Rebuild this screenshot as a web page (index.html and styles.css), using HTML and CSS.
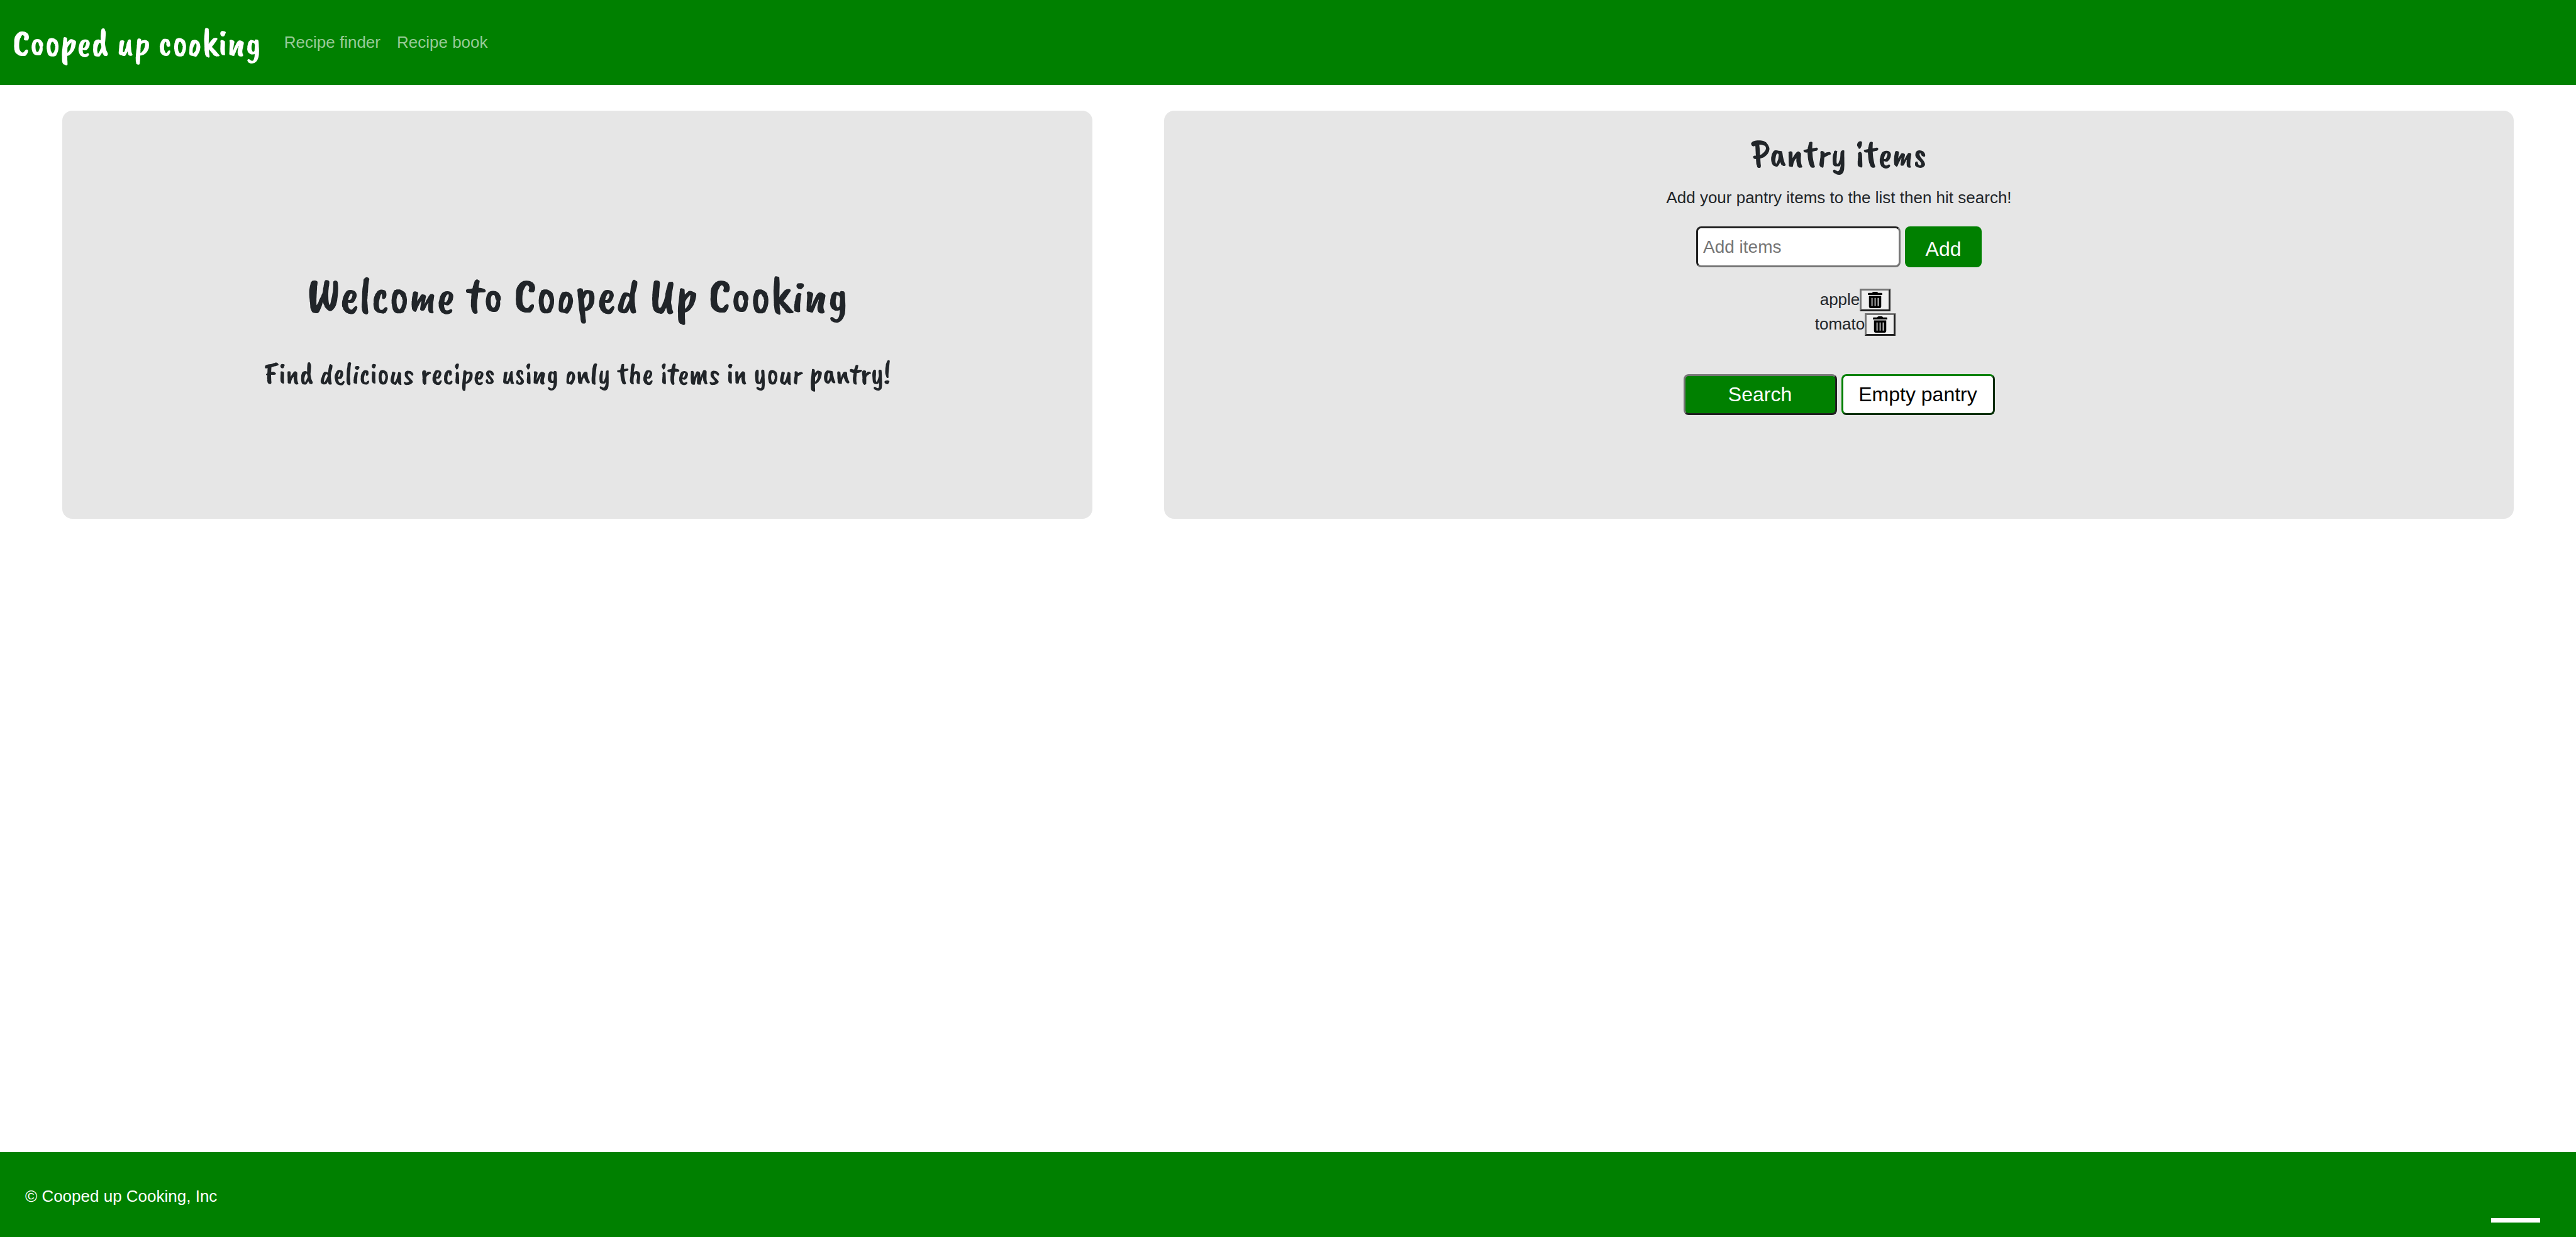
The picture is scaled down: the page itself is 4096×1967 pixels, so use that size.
FILE: index.html
```html
<!DOCTYPE html>
<html lang="en">
<head>
<meta charset="utf-8">
<title>Cooped up cooking</title>
<meta name="viewport" content="width=device-width, initial-scale=1">
<link rel="stylesheet" href="styles.css">
</head>
<body>
<header class="navbar">
  <a class="brand" href="#">Cooped up cooking</a>
  <nav class="nav">
    <a class="nav-link" href="#">Recipe finder</a>
    <a class="nav-link" href="#">Recipe book</a>
  </nav>
</header>
<main class="panels">
  <section class="panel welcome">
    <h1 class="welcome-title">Welcome to Cooped Up Cooking</h1>
    <h2 class="welcome-text">Find delicious recipes using only the items in your pantry!</h2>
  </section>
  <section class="panel pantry">
    <h2 class="pantry-title">Pantry items</h2>
    <p class="pantry-hint">Add your pantry items to the list then hit search!</p>
    <form class="row">
      <input class="field" type="text" placeholder="Add items" aria-label="Add items">
      <button class="btn btn-add" type="button">Add</button>
    </form>
    <ul class="items">
      <li class="item">apple<button class="trash" type="button" aria-label="Remove apple"><svg class="trash-icon" viewBox="0 0 28 32" aria-hidden="true"><path fill-rule="evenodd" d="M8 2Q9.500 0 11 0H17Q18.500 0 20 2H26.500Q28 2 28 3.500V6H0V3.500Q0 2 1.500 2ZM2 8H26V29Q26 32 23 32H5Q2 32 2 29ZM7 12V28H9V12ZM13 12V28H15V12ZM19 12V28H21V12Z"/></svg></button></li>
      <li class="item">tomato<button class="trash" type="button" aria-label="Remove tomato"><svg class="trash-icon" viewBox="0 0 28 32" aria-hidden="true"><path fill-rule="evenodd" d="M8 2Q9.500 0 11 0H17Q18.500 0 20 2H26.500Q28 2 28 3.500V6H0V3.500Q0 2 1.500 2ZM2 8H26V29Q26 32 23 32H5Q2 32 2 29ZM7 12V28H9V12ZM13 12V28H15V12ZM19 12V28H21V12Z"/></svg></button></li>
    </ul>
    <div class="row">
      <button class="btn btn-search" type="button">Search</button>
      <button class="btn btn-empty" type="button">Empty pantry</button>
    </div>
  </section>
</main>
<footer class="footer">
  <p class="copyright">© Cooped up Cooking, Inc</p>
  <span class="footer-bar"></span>
</footer>
</body>
</html>
```

FILE: styles.css
```css
* {
  box-sizing: border-box;
}

body {
  margin: 0;
  min-height: 100vh;
  display: flex;
  flex-direction: column;
  background: #fff;
  color: #212529;
  font-family: "Liberation Sans", Arial, sans-serif;
  font-size: 26px;
  line-height: 39px;
}

h1, h2, p, ul {
  margin: 0;
}

.brand,
.welcome-title,
.welcome-text,
.pantry-title {
  font-family: "Caveat Brush", cursive;
  font-weight: 500;
}

.navbar {
  display: flex;
  align-items: center;
  gap: 37px;
  min-height: 135px;
  padding: 0 20px;
  background: #008000;
}

.brand {
  color: #fff;
  font-size: 62px;
  line-height: 78px;
  text-decoration: none;
}

.nav {
  display: flex;
  gap: 26px;
}

.nav-link {
  color: rgba(255, 255, 255, 0.6);
  text-decoration: none;
}

.panels {
  flex: 1;
  display: grid;
  grid-template-columns: 1638fr 2146fr;
  align-items: start;
  gap: 114px;
  padding: 41px 99px;
}

.panel {
  display: flex;
  flex-direction: column;
  align-items: center;
  min-height: 33vh;
  border-radius: 16px;
  background: #e6e6e6;
  text-align: center;
}

.welcome {
  justify-content: center;
  gap: 47px;
  padding: 81px 39px 39px;
}

.welcome-title {
  font-size: 81px;
  line-height: 98px;
}

.welcome-text {
  font-size: 49px;
  line-height: 59px;
}

.pantry {
  padding: 32px 39px;
}

.pantry-title {
  font-size: 62px;
  line-height: 74px;
}

.pantry-hint {
  margin-top: 13px;
}

.row {
  display: flex;
  gap: 7px;
  margin-top: 26px;
}

.field,
.btn {
  height: 65px;
  border-radius: 8px;
  font-family: inherit;
}

.field {
  width: 325px;
  padding: 0 8px;
  border: 3px inset #767676;
  background: #fff;
  color: #212529;
  font-size: 28px;
}

.field::placeholder {
  color: #757575;
}

.btn {
  width: 244px;
  padding: 0;
  font-size: 32px;
}

.btn-add {
  width: 122px;
  padding-top: 8px;
  border: 0;
  background: #008000;
  color: #fff;
}

.btn-search {
  border: 3px outset #767676;
  background: #008000;
  color: #fff;
}

.btn-empty {
  border: 3px outset #008000;
  background: #fff;
  color: #000;
}

.items {
  margin: 32px 0 34px;
  padding: 0 0 0 52px;
  list-style: none;
}

.item {
  display: flex;
  justify-content: center;
  align-items: center;
}

.trash {
  display: flex;
  align-items: center;
  justify-content: center;
  width: 49px;
  height: 36px;
  padding: 0;
  border: 3px outset #767676;
  background: #efefef;
}

.trash-icon {
  width: 23px;
  height: 26px;
}

.footer {
  display: flex;
  justify-content: space-between;
  align-items: center;
  min-height: 135px;
  padding: 0 57px 23px 40px;
  background: #008000;
  color: #fff;
}

.copyright {
  padding-top: 28px;
}

.footer-bar {
  align-self: flex-end;
  width: 78px;
  height: 7px;
  background: #fff;
}
```
